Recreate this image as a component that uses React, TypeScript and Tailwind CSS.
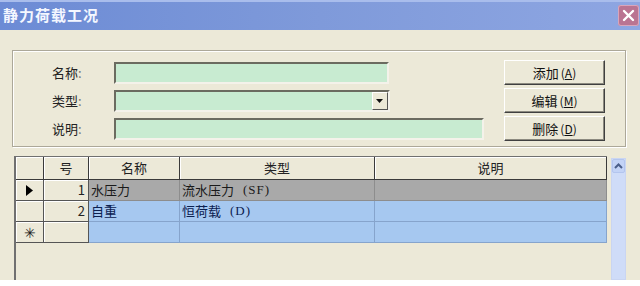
import React from "react";

const font = { fontFamily: '"Noto Sans CJK SC", "Liberation Sans", sans-serif' };

type Row = { mark: "arrow" | "star" | ""; no: string; name: string; type: string; code: string; note: string; tone: "gray" | "blue" };

const rows: Row[] = [
  { mark: "arrow", no: "1", name: "水压力", type: "流水压力", code: "(SF)", note: "", tone: "gray" },
  { mark: "", no: "2", name: "自重", type: "恒荷载", code: "(D)", note: "", tone: "blue" },
  { mark: "star", no: "", name: "", type: "", code: "", note: "", tone: "blue" },
];

function Btn({ label, hot }: { label: string; hot: string }) {
  return (
    <button className="flex h-[25px] w-[101px] items-center justify-center border border-t-white border-l-white border-r-[#404040] border-b-[#404040] bg-[#ece9d8] text-[13px] text-[#111] shadow-[inset_-1px_-1px_0_#8c8a80]">
      {label}
      <span className="ml-[2px] text-[12px]">
        (<span className="underline">{hot}</span>)
      </span>
    </button>
  );
}

function Field({ label, width, combo }: { label: string; width: string; combo?: boolean }) {
  return (
    <div className="flex h-[22px] items-center">
      <span className="w-[62px] text-[13px] text-[#222]">
        {label}
        <span className="text-[#777]">:</span>
      </span>
      <div
        className={`flex h-[22px] items-center justify-end border-2 border-t-[#6b6b60] border-l-[#6b6b60] border-r-[#f4f2ea] border-b-[#f4f2ea] bg-[#c8ebd1] ${width}`}
      >
        {combo ? (
          <div className="flex h-[18px] w-[16px] items-center justify-center border border-t-white border-l-white border-r-[#555] border-b-[#555] bg-[#ece9d8]">
            <svg width="8" height="5" viewBox="0 0 8 5">
              <path d="M0 0h7L3.5 4z" fill="#111" />
            </svg>
          </div>
        ) : null}
      </div>
    </div>
  );
}

const hdr =
  "flex items-center justify-center border-r border-b border-r-[#3a3a3a] border-b-[#3a3a3a] bg-[#ece9d8] text-[13px] text-[#222] shadow-[inset_1px_1px_0_#fff]";
const side =
  "flex items-center border-r border-b border-r-[#555] border-b-[#555] bg-[#ece9d8] text-[13px] text-[#222] shadow-[inset_1px_1px_0_#fff]";

export default function App() {
  return (
    <div className="flex h-[286px] w-[640px] flex-col overflow-hidden bg-white" style={font}>
      {/* title bar */}
      <div className="flex h-[30px] shrink-0 items-center justify-between bg-gradient-to-r from-[#6c8bd5] via-[#7f9ada] to-[#8ea6e2] shadow-[inset_0_2px_0_#a9bdec]">
        <span className="pl-[3px] text-[15px] font-bold tracking-[1px] text-[#f4f7ff]">静力荷载工况</span>
        <div className="mr-[1px] flex h-[21px] w-[21px] items-center justify-center rounded-[3px] bg-[#ba7492] shadow-[inset_0_0_0_1px_#d8a5bb]">
          <svg width="13" height="13" viewBox="0 0 13 13">
            <path d="M2 2l9 9M11 2l-9 9" stroke="#fff" strokeWidth="2.4" strokeLinecap="round" />
          </svg>
        </div>
      </div>

      {/* body */}
      <div className="flex h-[250px] flex-col bg-[#ece9d8] pl-[12px] pr-[14px] pt-[20px]">
        <div className="flex border border-[#aca899] pb-[5px] pl-[39px] pt-[9px] shadow-[inset_1px_1px_0_#fff,1px_1px_0_#fff]">
          <div className="flex w-[432px] flex-col gap-[6px] pt-[2px]">
            <Field label="名称" width="w-[275px]" />
            <Field label="类型" width="w-[276px]" combo />
            <Field label="说明" width="w-[370px]" />
          </div>
          <div className="ml-[20px] flex flex-col gap-[3px]">
            <Btn label="添加" hot="A" />
            <Btn label="编辑" hot="M" />
            <Btn label="删除" hot="D" />
          </div>
        </div>

        {/* grid */}
        <div className="mt-[9px] flex flex-1 pl-[2px]">
          <div className="flex w-[593px] flex-col border-l-2 border-t border-l-[#707070] border-t-[#707070] bg-[#ece9d8]">
            <div className="grid h-[23px] grid-cols-[28px_45px_91px_195px_232px]">
              <div className={hdr} />
              <div className={hdr}>号</div>
              <div className={hdr}>名称</div>
              <div className={hdr}>类型</div>
              <div className={hdr}>说明</div>
            </div>
            {rows.map((r, i) => {
              const cell =
                r.tone === "gray"
                  ? "border-r border-b border-[#8d8d8d] bg-[#a9a9a9] text-[#1a1a1a]"
                  : "border-r border-b border-[#86a4cc] bg-[#a6c8f0] text-[#0c2150]";
              return (
                <div key={i} className="grid h-[21px] grid-cols-[28px_45px_91px_195px_232px]">
                  <div className={`${side} justify-center`}>
                    {r.mark === "arrow" ? (
                      <svg width="7" height="11" viewBox="0 0 7 11">
                        <path d="M0 0l7 5.5L0 11z" fill="#000" />
                      </svg>
                    ) : r.mark === "star" ? (
                      <span className="text-[14px] leading-none text-[#222]">✳</span>
                    ) : null}
                  </div>
                  <div className={`${side} justify-end pr-[3px]`}>{r.no}</div>
                  <div className={`flex items-center pl-[2px] text-[13px] ${cell}`}>{r.name}</div>
                  <div className={`flex items-center gap-[9px] pl-[2px] text-[13px] ${cell}`}>
                    <span>{r.type}</span>
                    <span className="tracking-[1px]" style={{ fontFamily: '"Liberation Serif", serif' }}>
                      {r.code}
                    </span>
                  </div>
                  <div className={`flex items-center pl-[2px] text-[13px] ${cell}`}>{r.note}</div>
                </div>
              );
            })}
          </div>
          <div className="ml-[4px] mt-[2px] flex w-[16px] flex-col border border-[#c9d5f2] bg-[#cfdcf8]">
            <div className="flex h-[14px] items-center justify-center rounded-[2px] border border-[#b3c5ee] bg-[#c3d3f6]">
              <svg width="9" height="6" viewBox="0 0 9 6">
                <path d="M1 5l3.5-3.5L8 5" stroke="#4b5f8a" strokeWidth="2" fill="none" />
              </svg>
            </div>
          </div>
        </div>
      </div>
      <div className="flex-1 bg-white" />
    </div>
  );
}
